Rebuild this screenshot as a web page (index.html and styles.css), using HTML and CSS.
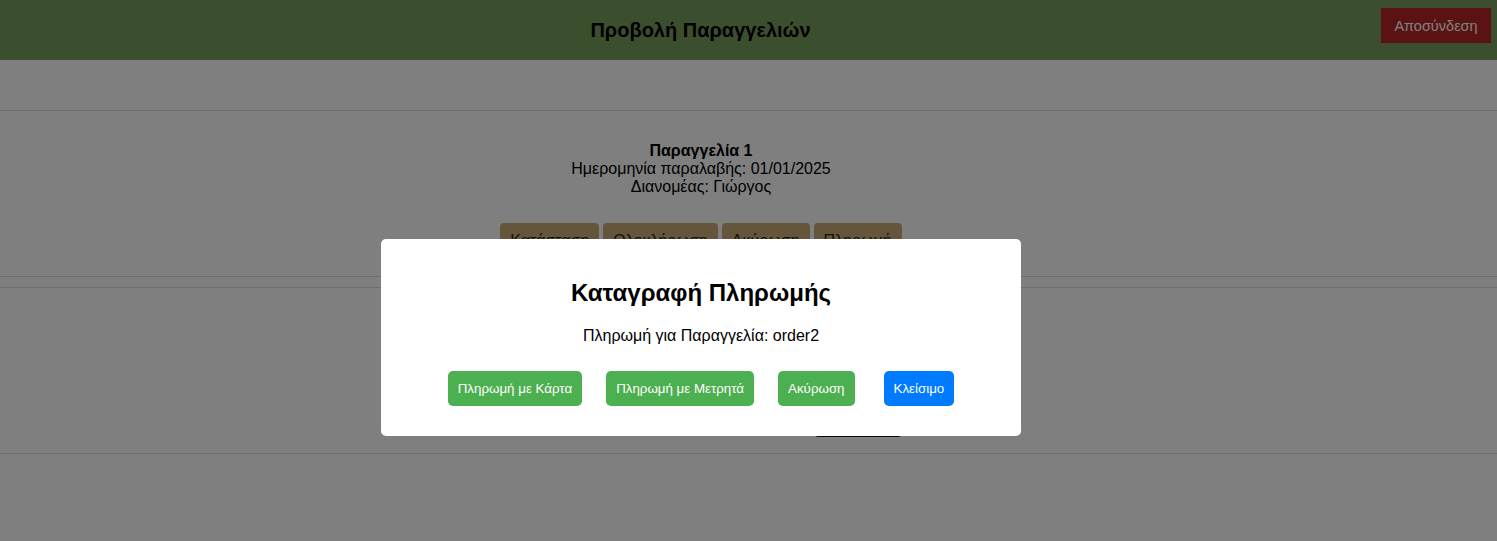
FILE: index.html
```html
<!DOCTYPE html>
<html lang="el">
<head>
<meta charset="utf-8">
<title>Προβολή Παραγγελιών</title>
<link rel="stylesheet" href="styles.css">
</head>
<body>
<header class="topbar">
  <h1 class="topbar-title">Προβολή Παραγγελιών</h1>
  <button class="logout-btn">Αποσύνδεση</button>
</header>

<main class="orders">
  <section class="order-card">
    <p class="order-info"><strong>Παραγγελία 1</strong><br>Ημερομηνία παραλαβής: 01/01/2025<br>Διανομέας: Γιώργος</p>
    <div class="order-actions">
      <button class="order-btn">Κατάσταση</button>
      <button class="order-btn">Ολοκλήρωση</button>
      <button class="order-btn">Ακύρωση</button>
      <button class="order-btn">Πληρωμή</button>
    </div>
  </section>
  <section class="order-card">
    <p class="order-info"><strong>Παραγγελία 2</strong><br>Ημερομηνία παραλαβής: 02/01/2025<br>Διανομέας: Νίκος</p>
    <div class="order-actions">
      <button class="order-btn">Κατάσταση</button>
      <button class="order-btn">Ολοκλήρωση</button>
      <button class="order-btn">Ακύρωση</button>
      <button class="order-btn order-btn-focused">Πληρωμή</button>
    </div>
  </section>
</main>

<div class="modal-overlay">
  <div class="modal">
    <h2 class="modal-title">Καταγραφή Πληρωμής</h2>
    <p class="modal-text">Πληρωμή για Παραγγελία: order2</p>
    <div class="modal-actions">
      <button class="modal-btn modal-btn-green">Πληρωμή με Κάρτα</button>
      <button class="modal-btn modal-btn-green">Πληρωμή με Μετρητά</button>
      <button class="modal-btn modal-btn-green">Ακύρωση</button>
      <button class="modal-btn modal-btn-blue modal-btn-close">Κλείσιμο</button>
    </div>
  </div>
</div>
</body>
</html>
```

FILE: styles.css
```css
* {
  box-sizing: border-box;
}

html, body {
  margin: 0;
  padding: 0;
}

body {
  font-family: "Liberation Sans", Arial, sans-serif;
  font-size: 16px;
  color: #000;
  background: #fff;
  height: 541px;
  overflow: hidden;
}

.topbar {
  height: 60px;
  background: #779c5c;
  display: flex;
  align-items: center;
  padding: 0 6px 0 20px;
}

.topbar-title {
  flex: 1;
  margin: 0;
  text-align: center;
  font-size: 20px;
  font-weight: bold;
  color: #000;
}

.logout-btn {
  align-self: flex-start;
  margin-top: 8px;
  height: 35px;
  width: 110px;
  padding: 0;
  border: none;
  background: #b42426;
  color: #fff;
  font-family: "Liberation Sans", Arial, sans-serif;
  font-size: 14.5px;
}

.orders {
  padding-top: 40px;
}

.order-card {
  margin: 10px 0;
  border-top: 1px solid #ddd;
  border-bottom: 1px solid #ddd;
  padding: 15px 95px 17px 0;
  text-align: center;
}

.order-info {
  margin: 16px 0;
  line-height: 18px;
}

.order-actions {
  display: flex;
  justify-content: center;
  gap: 4px;
  margin-top: 27px;
}

.order-btn {
  font-family: "Liberation Sans", Arial, sans-serif;
  font-size: 16px;
  line-height: 18px;
  padding: 9px 10px;
  border: none;
  border-radius: 4px;
  background: #caaa74;
  color: #222;
}

.order-btn-focused {
  outline: 1px solid #101010;
  outline-offset: 0;
}

.modal-overlay {
  position: fixed;
  inset: 0;
  background: rgba(0, 0, 0, 0.5);
  display: flex;
  justify-content: center;
  align-items: flex-start;
  padding: 239px 95px 0 0;
}

.modal {
  width: 640px;
  background: #fff;
  border-radius: 5px;
  padding: 20px;
  text-align: center;
}

.modal-title {
  margin: 20px 0;
  font-size: 24px;
  line-height: 28px;
  font-weight: bold;
}

.modal-text {
  margin: 16px 0;
  line-height: 18px;
}

.modal-actions {
  display: flex;
  justify-content: center;
}

.modal-btn {
  font-family: "Liberation Sans", Arial, sans-serif;
  font-size: 13.333px;
  line-height: 15px;
  padding: 10px;
  margin: 10px 12px;
  border: none;
  border-radius: 5px;
  color: #fff;
}

.modal-btn-green {
  background: #4caf50;
}

.modal-btn-blue {
  background: #007bff;
}

.modal-btn-close {
  margin-left: 17px;
}
```
